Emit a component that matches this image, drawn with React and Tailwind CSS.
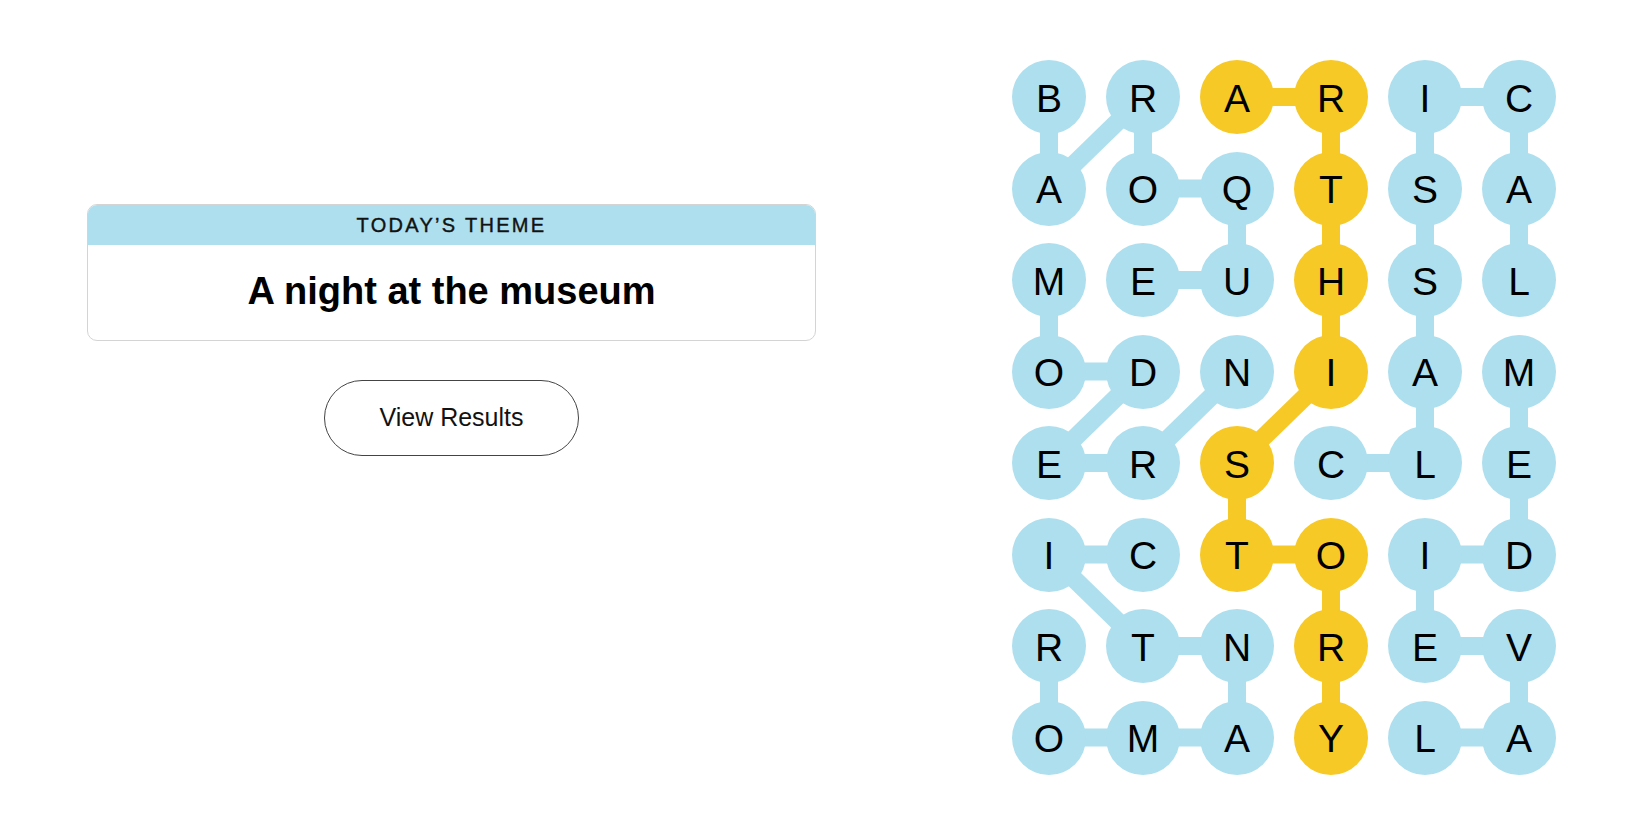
const BLUE = "#aedfee";
const YELLOW = "#f7c926";

const board = [
  "BRARIC",
  "AOQTSA",
  "MEUHSL",
  "ODNIAM",
  "ERSCLE",
  "ICTOID",
  "RTNREV",
  "OMAYLA",
];

// spangram cells (row, col)
const spangram = [
  [0, 2], [0, 3], [1, 3], [2, 3], [3, 3], [4, 2], [5, 2], [5, 3], [6, 3], [7, 3],
];

// found words as paths of [row, col]
const words = [
  { path: [[0, 0], [1, 0], [0, 1], [1, 1], [1, 2], [2, 2], [2, 1]], color: BLUE }, // BAROQUE
  { path: [[2, 0], [3, 0], [3, 1], [4, 0], [4, 1], [3, 2]], color: BLUE }, // MODERN
  { path: spangram, color: YELLOW }, // ARTHISTORY
  { path: [[4, 3], [4, 4], [3, 4], [2, 4], [1, 4], [0, 4], [0, 5], [1, 5], [2, 5]], color: BLUE }, // CLASSICAL
  { path: [[3, 5], [4, 5], [5, 5], [5, 4], [6, 4], [6, 5], [7, 5], [7, 4]], color: BLUE }, // MEDIEVAL
  { path: [[6, 0], [7, 0], [7, 1], [7, 2], [6, 2], [6, 1], [5, 0], [5, 1]], color: BLUE }, // ROMANTIC
];

const CELL = 74;
const STEP_X = 94;
const STEP_Y = 91.5;
const W = CELL * 6 + (STEP_X - CELL) * 5;
const H = CELL * 8 + (STEP_Y - CELL) * 7;

const isSpangram = (r, c) => spangram.some(([a, b]) => a === r && b === c);
const cx = (c) => CELL / 2 + c * STEP_X;
const cy = (r) => CELL / 2 + r * STEP_Y;

function Board() {
  return (
    <div className="relative" style={{ width: W, height: H }}>
      {/* connectors */}
      <svg
        className="absolute inset-0"
        width={W}
        height={H}
        viewBox={`0 0 ${W} ${H}`}
      >
        {words.map((w, i) =>
          w.path.slice(1).map(([r, c], j) => {
            const [pr, pc] = w.path[j];
            return (
              <line
                key={`${i}-${j}`}
                x1={cx(pc)}
                y1={cy(pr)}
                x2={cx(c)}
                y2={cy(r)}
                stroke={w.color}
                strokeWidth="18"
              />
            );
          })
        )}
      </svg>

      <div className="relative grid grid-cols-[repeat(6,74px)] grid-rows-[repeat(8,74px)] gap-x-[20px] gap-y-[17.5px]">
        {board.map((row, r) =>
          row.split("").map((ch, c) => (
            <div
              key={`${r}-${c}`}
              className={`flex items-center justify-center rounded-full pt-[2px] text-[39px] leading-none text-black ${
                isSpangram(r, c) ? "bg-[#f7c926]" : "bg-[#aedfee]"
              }`}
            >
              {ch}
            </div>
          ))
        )}
      </div>
    </div>
  );
}

export default function App() {
  return (
    <div
      className="flex h-[825px] w-full bg-white"
      style={{ fontFamily: '"Liberation Sans", Arial, sans-serif' }}
    >
      {/* left: theme + button */}
      <div className="ml-[87px] flex w-[729px] flex-col items-center pt-[204px]">
        <div className="w-full overflow-hidden rounded-[10px] border border-[#d4d4d4]">
          <div className="flex h-[40px] items-center justify-center bg-[#aedfee] text-[20px] tracking-[2.3px] text-[#121212] [-webkit-text-stroke:0.4px_#121212]">
            TODAY’S THEME
          </div>
          <div className="flex h-[95px] items-center justify-center pb-[3px] text-[38px] font-bold text-black">
            A night at the museum
          </div>
        </div>

        <button className="mt-[39px] h-[76px] w-[255px] rounded-full border border-[#444] text-[25px] text-[#121212]">
          View Results
        </button>
      </div>

      {/* right: board */}
      <div className="ml-[196px] pt-[60px]">
        <Board />
      </div>
    </div>
  );
}
